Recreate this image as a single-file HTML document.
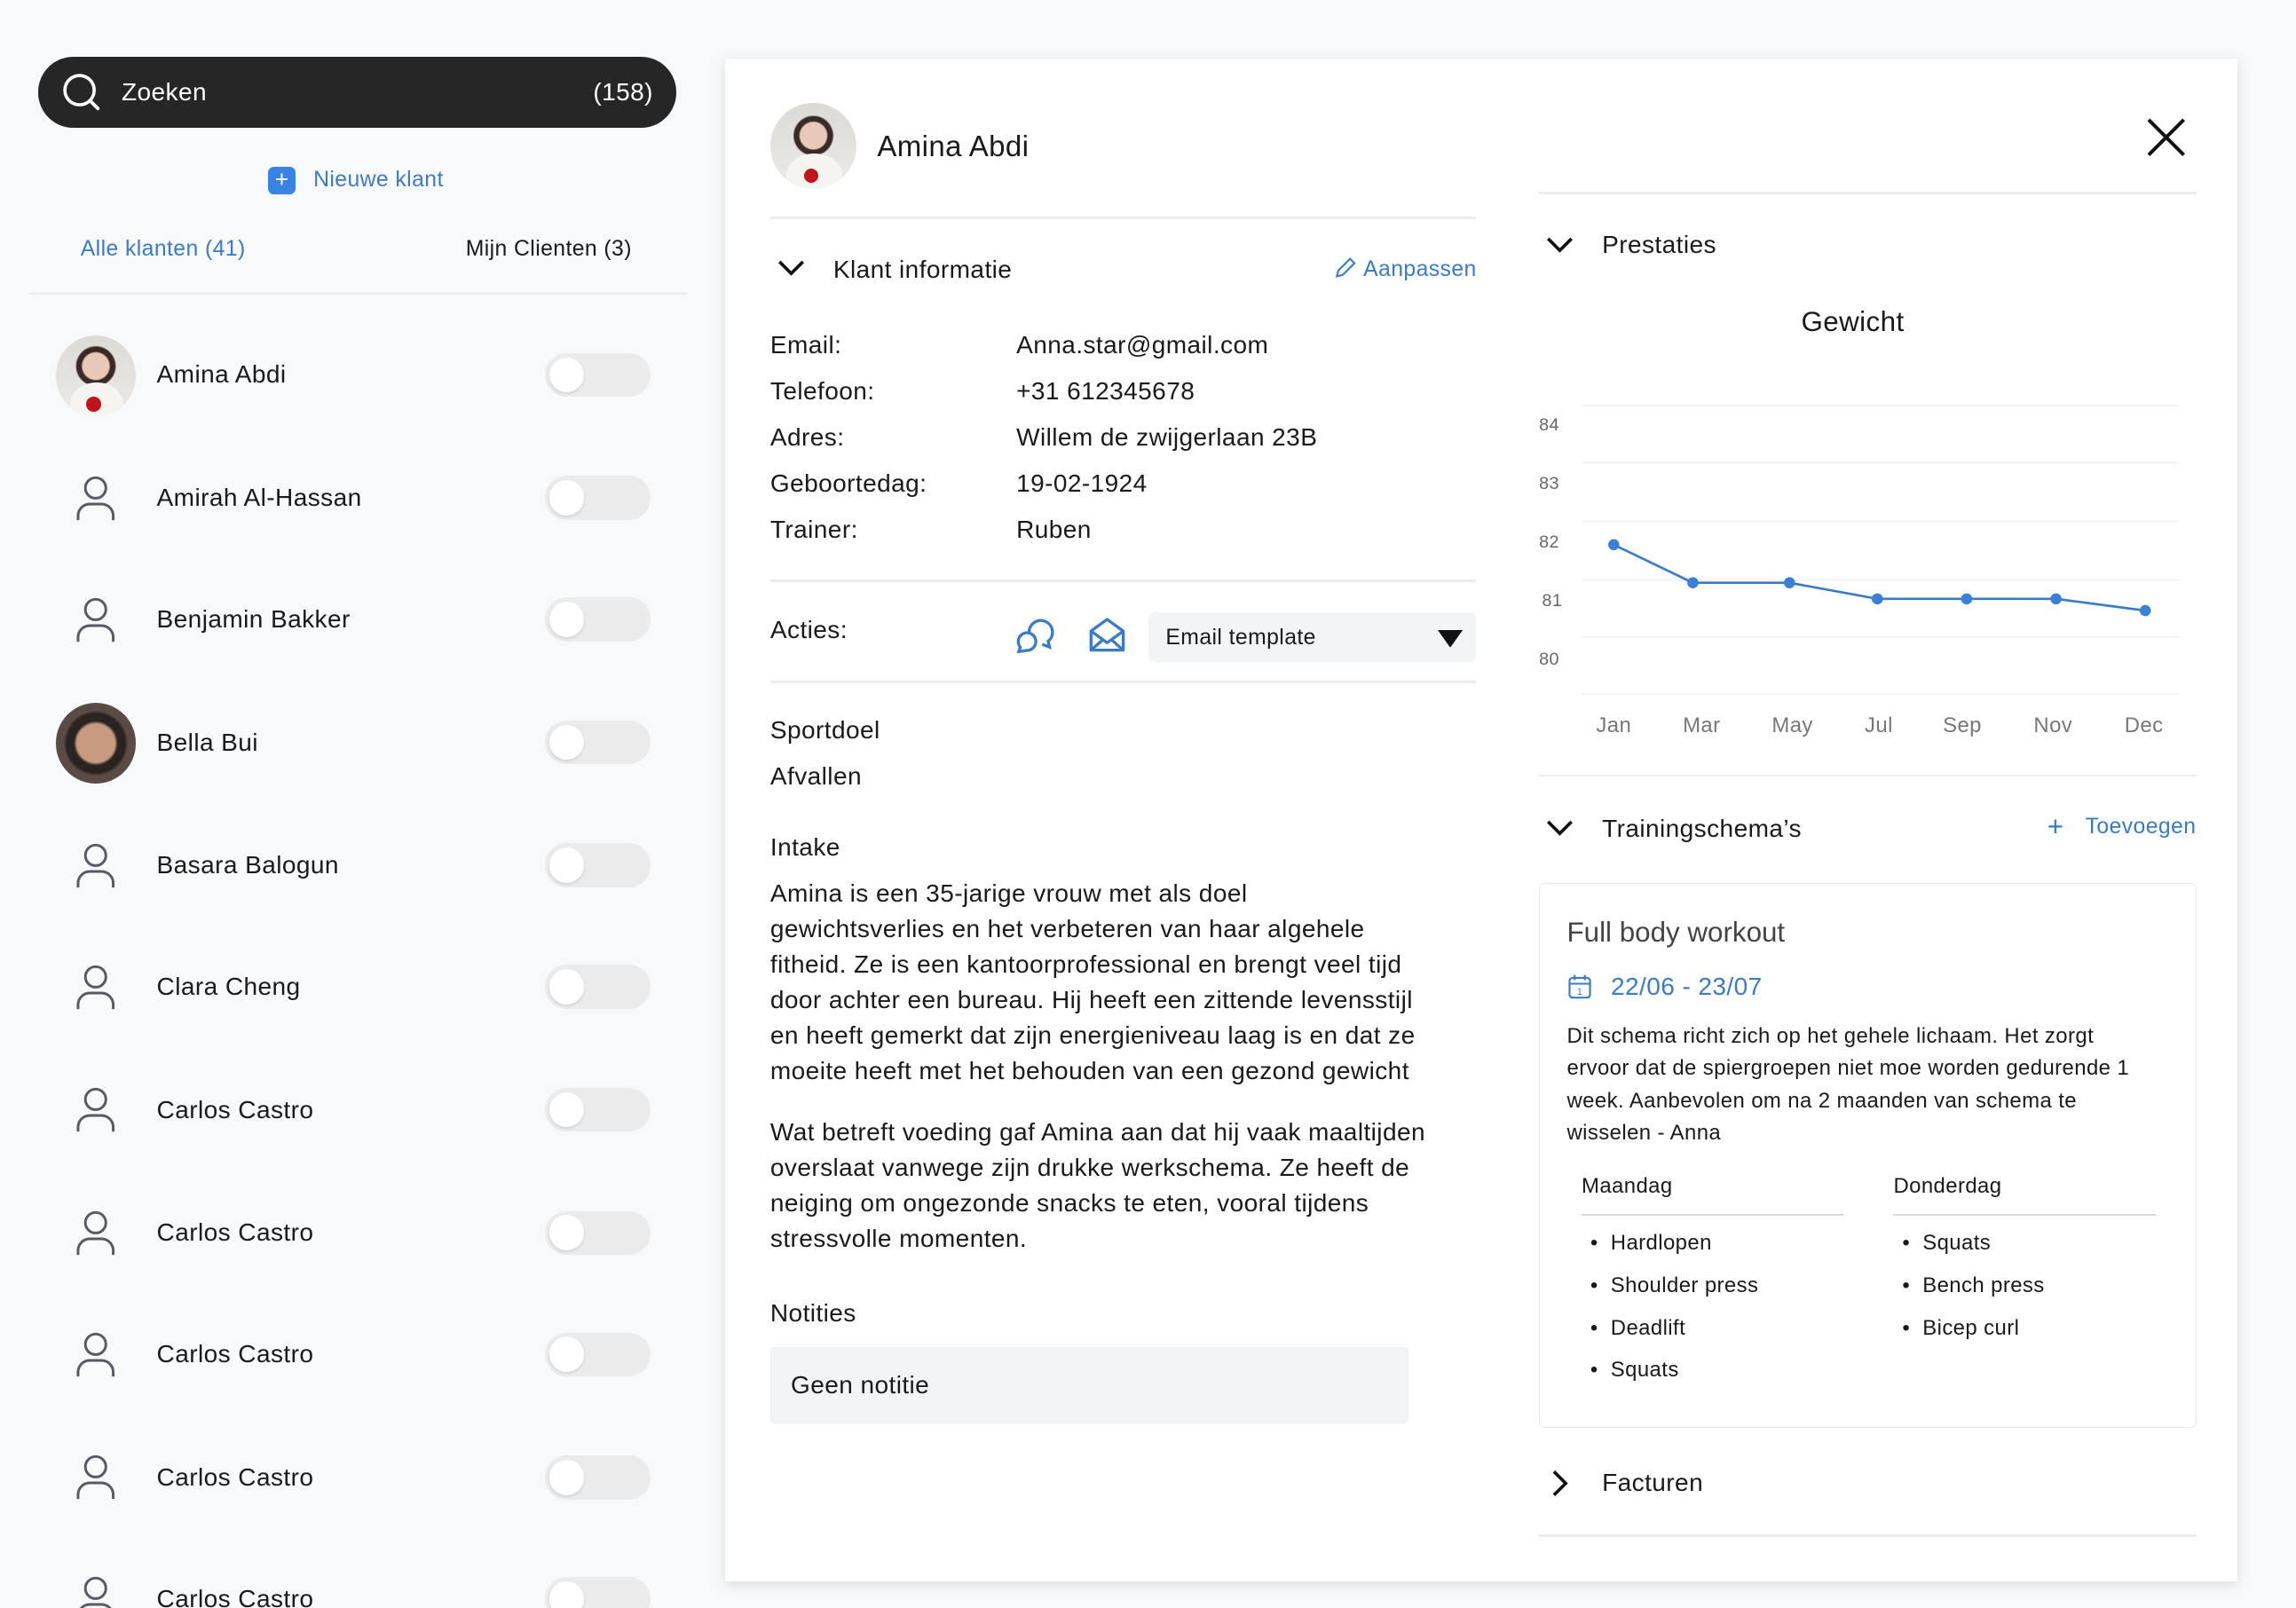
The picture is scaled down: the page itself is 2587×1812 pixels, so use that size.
<!DOCTYPE html>
<html><head><meta charset="utf-8"><style>
html,body{margin:0;padding:0;background:#f8f9fb;overflow:hidden}
#w{position:relative;width:1568px;height:1098px;zoom:1.65;font-family:"Liberation Sans",sans-serif;color:#1a1a1a;letter-spacing:0.25px}
.a{position:absolute;white-space:nowrap}
.t{position:absolute;white-space:nowrap;line-height:24px;transform:translateY(-12px)}
.hr{position:absolute;height:1.5px;background:#ececee}
.tog{position:absolute;left:372px;width:72px;height:30px;border-radius:15px;background:#ebebec}
.tog:after{content:"";position:absolute;left:3px;top:3px;width:24px;height:24px;border-radius:50%;background:#fff;box-shadow:0 1px 2px rgba(0,0,0,.12)}
.nm{position:absolute;left:107px;font-size:17px;line-height:24px;transform:translateY(-12px)}
.ui{position:absolute;left:50px;width:30px;height:32px}
.blue{color:#3a7bc8}
</style></head><body><div id="w">

<div class="a" style="left:26px;top:39px;width:436px;height:48px;border-radius:24px;background:#262626"></div>
<svg class="a" style="left:42px;top:49px" width="28" height="28" viewBox="0 0 28 28"><circle cx="12.5" cy="12.5" r="10" fill="none" stroke="#fff" stroke-width="2.2"/><line x1="20" y1="20" x2="25" y2="25" stroke="#fff" stroke-width="2.4" stroke-linecap="round"/></svg>
<div class="t" style="left:83px;top:63px;color:#fff;font-size:17px">Zoeken</div>
<div class="t" style="right:1122px;top:63px;color:#fff;font-size:17px">(158)</div>

<div class="a" style="left:183px;top:114px;width:19px;height:19px;border-radius:4px;background:#3b82e6;color:#fff;font-size:16px;line-height:18px;text-align:center">+</div>
<div class="t blue" style="left:214px;top:123px;font-size:15px">Nieuwe klant</div>
<div class="t blue" style="left:55px;top:170px;font-size:15px">Alle klanten (41)</div>
<div class="t" style="left:318px;top:170px;font-size:15px">Mijn Clienten (3)</div>
<div class="hr" style="left:20px;top:200px;width:449px"></div>

<svg width="0" height="0" style="position:absolute"><defs><g id="usr"><circle cx="15" cy="9" r="7" fill="none" stroke="#555a66" stroke-width="1.8"/><path d="M3 31v-3a8 8 0 0 1 8-8h8a8 8 0 0 1 8 8v3" fill="none" stroke="#555a66" stroke-width="1.8"/></g></defs></svg>

<div class="a" style="left:38px;top:229px;width:55px;height:55px;border-radius:50%;background:radial-gradient(circle at 50% 38%,#e8c9b8 0 9px,#3a2a25 10px 13px,transparent 14px),linear-gradient(#dcdad6,#ecebe8);overflow:hidden"><div style="position:absolute;left:10px;top:32px;width:36px;height:30px;border-radius:50% 50% 0 0;background:#f6f4f0"></div><div style="position:absolute;left:21px;top:42px;width:10px;height:10px;border-radius:50%;background:#c0151b"></div></div>
<div class="nm" style="top:256px">Amina Abdi</div><div class="tog" style="top:241px"></div>

<svg class="ui" style="top:324px" viewBox="0 0 30 32"><use href="#usr"/></svg>
<div class="nm" style="top:340px">Amirah Al-Hassan</div><div class="tog" style="top:325px"></div>

<svg class="ui" style="top:407px" viewBox="0 0 30 32"><use href="#usr"/></svg>
<div class="nm" style="top:423px">Benjamin Bakker</div><div class="tog" style="top:408px"></div>

<div class="a" style="left:38px;top:480px;width:55px;height:55px;border-radius:50%;background:radial-gradient(ellipse at 50% 50%,#c89a80 0 13px,#2a2420 15px 20px,#5a4c44 22px);"></div>
<div class="nm" style="top:507px">Bella Bui</div><div class="tog" style="top:492px"></div>

<svg class="ui" style="top:575px" viewBox="0 0 30 32"><use href="#usr"/></svg>
<div class="nm" style="top:591px">Basara Balogun</div><div class="tog" style="top:576px"></div>

<svg class="ui" style="top:658px" viewBox="0 0 30 32"><use href="#usr"/></svg>
<div class="nm" style="top:674px">Clara Cheng</div><div class="tog" style="top:659px"></div>

<svg class="ui" style="top:742px" viewBox="0 0 30 32"><use href="#usr"/></svg>
<div class="nm" style="top:758px">Carlos Castro</div><div class="tog" style="top:743px"></div>

<svg class="ui" style="top:826px" viewBox="0 0 30 32"><use href="#usr"/></svg>
<div class="nm" style="top:842px">Carlos Castro</div><div class="tog" style="top:827px"></div>

<svg class="ui" style="top:909px" viewBox="0 0 30 32"><use href="#usr"/></svg>
<div class="nm" style="top:925px">Carlos Castro</div><div class="tog" style="top:910px"></div>

<svg class="ui" style="top:993px" viewBox="0 0 30 32"><use href="#usr"/></svg>
<div class="nm" style="top:1009px">Carlos Castro</div><div class="tog" style="top:994px"></div>

<svg class="ui" style="top:1076px" viewBox="0 0 30 32"><use href="#usr"/></svg>
<div class="nm" style="top:1092px">Carlos Castro</div><div class="tog" style="top:1077px"></div>

<div class="a" style="left:495px;top:40px;width:1033px;height:1040px;background:#fff;box-shadow:0 2px 8px rgba(0,0,0,.12)"></div>

<div class="a" style="left:526px;top:70px;width:59px;height:59px;border-radius:50%;background:radial-gradient(circle at 50% 38%,#e8c9b8 0 9px,#3a2a25 10px 13px,transparent 14px),linear-gradient(#dcdad6,#ecebe8);overflow:hidden"><div style="position:absolute;left:11px;top:35px;width:38px;height:30px;border-radius:50% 50% 0 0;background:#f6f4f0"></div><div style="position:absolute;left:23px;top:45px;width:10px;height:10px;border-radius:50%;background:#c0151b"></div></div>
<div class="t" style="left:599px;top:100px;font-size:20px">Amina Abdi</div>
<svg class="a" style="left:1464px;top:79px" width="30" height="30"><path d="M3 3L27 27M27 3L3 27" stroke="#111" stroke-width="2.4"/></svg>

<div class="hr" style="left:526px;top:148px;width:482px"></div>
<svg class="a" style="left:530px;top:176px" width="20" height="14"><path d="M2 3l8 8 8-8" fill="none" stroke="#111" stroke-width="2.2"/></svg>
<div class="t" style="left:569px;top:184px;font-size:17px">Klant informatie</div>
<svg class="a" style="left:911px;top:176px" width="15" height="15"><path d="M2 13l1-4 8-8 3 3-8 8z" fill="none" stroke="#3a7bc8" stroke-width="1.3"/></svg>
<div class="t blue" style="left:931px;top:184px;font-size:15px">Aanpassen</div>

<div class="t" style="left:526px;top:236px;font-size:17px">Email:</div><div class="t" style="left:694px;top:236px;font-size:17px">Anna.star@gmail.com</div>
<div class="t" style="left:526px;top:267px;font-size:17px">Telefoon:</div><div class="t" style="left:694px;top:267px;font-size:17px">+31 612345678</div>
<div class="t" style="left:526px;top:299px;font-size:17px">Adres:</div><div class="t" style="left:694px;top:299px;font-size:17px">Willem de zwijgerlaan 23B</div>
<div class="t" style="left:526px;top:330px;font-size:17px">Geboortedag:</div><div class="t" style="left:694px;top:330px;font-size:17px">19-02-1924</div>
<div class="t" style="left:526px;top:362px;font-size:17px">Trainer:</div><div class="t" style="left:694px;top:362px;font-size:17px">Ruben</div>

<div class="hr" style="left:526px;top:396px;width:482px"></div>
<div class="t" style="left:526px;top:430px;font-size:17px">Acties:</div>
<svg class="a" style="left:693px;top:420px" width="28" height="28" viewBox="0 0 28 28"><path d="M10 12a8 8 0 1 1 13 6l1 4-5-2" fill="none" stroke="#3a7bc8" stroke-width="2"/><path d="M3 25l1-3a6 6 0 1 1 6 2z" fill="none" stroke="#3a7bc8" stroke-width="2"/></svg>
<svg class="a" style="left:743px;top:420px" width="26" height="28" viewBox="0 0 26 28"><path d="M2 11L13 3l11 8v13H2z M2 11l11 8 11-8 M2 24l8-7 M24 24l-8-7" fill="none" stroke="#3a7bc8" stroke-width="2" stroke-linejoin="round"/></svg>
<div class="a" style="left:784px;top:418px;width:224px;height:34px;border-radius:4px;background:#f3f4f6"></div>
<div class="t" style="left:796px;top:436px;font-size:15px">Email template</div>
<svg class="a" style="left:982px;top:430px" width="17" height="12"><path d="M0 0h17L8.5 12z" fill="#111"/></svg>
<div class="hr" style="left:526px;top:465px;width:482px"></div>

<div class="t" style="left:526px;top:499px;font-size:17px;font-weight:500">Sportdoel</div>
<div class="t" style="left:526px;top:530px;font-size:17px">Afvallen</div>
<div class="t" style="left:526px;top:579px;font-size:17px;font-weight:500">Intake</div>
<div class="a" style="left:526px;top:598px;width:490px;font-size:17px;line-height:24.3px;white-space:normal">Amina is een 35-jarige vrouw met als doel<br>gewichtsverlies en het verbeteren van haar algehele<br>fitheid. Ze is een kantoorprofessional en brengt veel tijd<br>door achter een bureau. Hij heeft een zittende levensstijl<br>en heeft gemerkt dat zijn energieniveau laag is en dat ze<br>moeite heeft met het behouden van een gezond gewicht</div>
<div class="a" style="left:526px;top:761px;width:490px;font-size:17px;line-height:24.3px;white-space:normal">Wat betreft voeding gaf Amina aan dat hij vaak maaltijden<br>overslaat vanwege zijn drukke werkschema. Ze heeft de<br>neiging om ongezonde snacks te eten, vooral tijdens<br>stressvolle momenten.</div>
<div class="t" style="left:526px;top:897px;font-size:17px;font-weight:500">Notities</div>
<div class="a" style="left:526px;top:920px;width:436px;height:52px;border-radius:3px;background:#f3f4f6;border:1px solid #eceef1;box-sizing:border-box"></div>
<div class="t" style="left:540px;top:946px;font-size:17px">Geen notitie</div>

<div class="hr" style="left:1051px;top:131px;width:449px"></div>
<svg class="a" style="left:1055px;top:160px" width="20" height="14"><path d="M2 3l8 8 8-8" fill="none" stroke="#111" stroke-width="2.2"/></svg>
<div class="t" style="left:1094px;top:167px;font-size:17px">Prestaties</div>
<div class="t" style="left:1230px;top:220px;font-size:19px">Gewicht</div>

<svg class="a" style="left:1040px;top:260px" width="460" height="250" viewBox="1040 260 460 250" font-family="Liberation Sans" font-size="12" fill="#666">
<g stroke="#f0f0f2" stroke-width="1"><line x1="1080" y1="277" x2="1488" y2="277"/><line x1="1080" y1="316" x2="1488" y2="316"/><line x1="1080" y1="356" x2="1488" y2="356"/><line x1="1080" y1="396" x2="1488" y2="396"/><line x1="1080" y1="435" x2="1488" y2="435"/><line x1="1080" y1="474" x2="1488" y2="474"/></g>
<text x="1051" y="294">84</text><text x="1051" y="334">83</text><text x="1051" y="374">82</text><text x="1053" y="414">81</text><text x="1051" y="454">80</text>
<polyline points="1102,372 1156,398 1222,398 1282,409 1343,409 1404,409 1465,417" fill="none" stroke="#3a7bc8" stroke-width="1.6"/>
<g fill="#3b7fd6"><circle cx="1102" cy="372" r="3.8"/><circle cx="1156" cy="398" r="3.8"/><circle cx="1222" cy="398" r="3.8"/><circle cx="1282" cy="409" r="3.8"/><circle cx="1343" cy="409" r="3.8"/><circle cx="1404" cy="409" r="3.8"/><circle cx="1465" cy="417" r="3.8"/></g>
<g font-size="14.5" fill="#777" text-anchor="middle"><text x="1102" y="500">Jan</text><text x="1162" y="500">Mar</text><text x="1224" y="500">May</text><text x="1283" y="500">Jul</text><text x="1340" y="500">Sep</text><text x="1402" y="500">Nov</text><text x="1464" y="500">Dec</text></g>
</svg>

<div class="hr" style="left:1051px;top:529px;width:449px"></div>
<svg class="a" style="left:1055px;top:558px" width="20" height="14"><path d="M2 3l8 8 8-8" fill="none" stroke="#111" stroke-width="2.2"/></svg>
<div class="t" style="left:1094px;top:566px;font-size:17px">Trainingschema’s</div>
<div class="t blue" style="left:1398px;top:565px;font-size:19px">+</div>
<div class="t blue" style="left:1424px;top:565px;font-size:15px">Toevoegen</div>

<div class="a" style="left:1051px;top:603px;width:449px;height:372px;border:1px solid #e8e9ec;border-radius:4px;box-sizing:border-box"></div>
<div class="t" style="left:1070px;top:637px;font-size:19px;color:#444;letter-spacing:0">Full body workout</div>
<svg class="a" style="left:1070px;top:665px" width="17" height="18" viewBox="0 0 17 18"><rect x="1.5" y="3" width="14" height="13.5" rx="2" fill="none" stroke="#3a7bc8" stroke-width="1.3"/><line x1="1.5" y1="7" x2="15.5" y2="7" stroke="#3a7bc8" stroke-width="1.2"/><line x1="5" y1="1" x2="5" y2="4.5" stroke="#3a7bc8" stroke-width="1.3"/><line x1="12" y1="1" x2="12" y2="4.5" stroke="#3a7bc8" stroke-width="1.3"/><text x="8.5" y="14.5" font-size="6.5" fill="#3a7bc8" text-anchor="middle" font-family="Liberation Sans">1</text></svg>
<div class="t blue" style="left:1100px;top:674px;font-size:17px">22/06 - 23/07</div>
<div class="a" style="left:1070px;top:697px;width:420px;font-size:14.5px;line-height:22px;white-space:normal">Dit schema richt zich op het gehele lichaam. Het zorgt<br>ervoor dat de spiergroepen niet moe worden gedurende 1<br>week. Aanbevolen om na 2 maanden van schema te<br>wisselen - Anna</div>
<div class="t" style="left:1080px;top:810px;font-size:14.5px">Maandag</div>
<div class="t" style="left:1293px;top:810px;font-size:14.5px">Donderdag</div>
<div class="a" style="left:1080px;top:829px;width:179px;height:1.5px;background:#d8d8da"></div>
<div class="a" style="left:1293px;top:829px;width:179px;height:1.5px;background:#d8d8da"></div>
<div class="t" style="left:1086px;top:849px;font-size:14.5px">•&nbsp; Hardlopen</div>
<div class="t" style="left:1086px;top:878px;font-size:14.5px">•&nbsp; Shoulder press</div>
<div class="t" style="left:1086px;top:907px;font-size:14.5px">•&nbsp; Deadlift</div>
<div class="t" style="left:1086px;top:936px;font-size:14.5px">•&nbsp; Squats</div>
<div class="t" style="left:1299px;top:849px;font-size:14.5px">•&nbsp; Squats</div>
<div class="t" style="left:1299px;top:878px;font-size:14.5px">•&nbsp; Bench press</div>
<div class="t" style="left:1299px;top:907px;font-size:14.5px">•&nbsp; Bicep curl</div>

<svg class="a" style="left:1058px;top:1003px" width="14" height="20"><path d="M3 2l8 8-8 8" fill="none" stroke="#111" stroke-width="2.2"/></svg>
<div class="t" style="left:1094px;top:1013px;font-size:17px">Facturen</div>
<div class="hr" style="left:1051px;top:1048px;width:449px"></div>

</div></body></html>
